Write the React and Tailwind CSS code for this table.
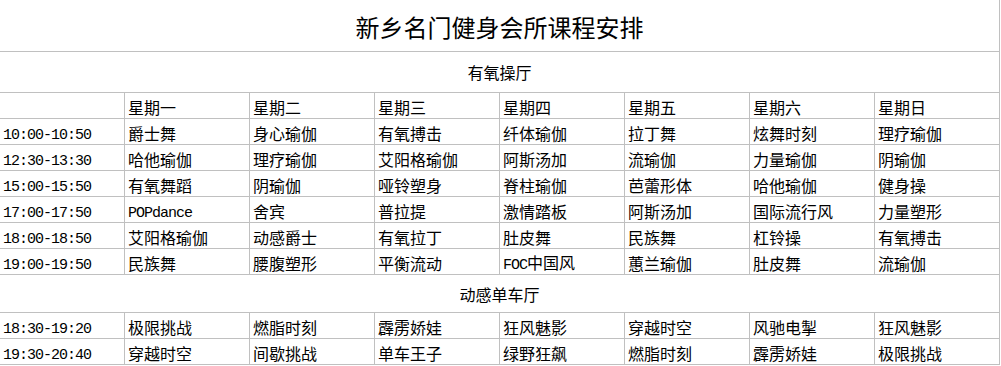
const days = ["星期一", "星期二", "星期三", "星期四", "星期五", "星期六", "星期日"];

const aerobic = [
  ["10:00-10:50", ["爵士舞", "身心瑜伽", "有氧搏击", "纤体瑜伽", "拉丁舞", "炫舞时刻", "理疗瑜伽"]],
  ["12:30-13:30", ["哈他瑜伽", "理疗瑜伽", "艾阳格瑜伽", "阿斯汤加", "流瑜伽", "力量瑜伽", "阴瑜伽"]],
  ["15:00-15:50", ["有氧舞蹈", "阴瑜伽", "哑铃塑身", "脊柱瑜伽", "芭蕾形体", "哈他瑜伽", "健身操"]],
  ["17:00-17:50", ["POPdance", "舍宾", "普拉提", "激情踏板", "阿斯汤加", "国际流行风", "力量塑形"]],
  ["18:00-18:50", ["艾阳格瑜伽", "动感爵士", "有氧拉丁", "肚皮舞", "民族舞", "杠铃操", "有氧搏击"]],
  ["19:00-19:50", ["民族舞", "腰腹塑形", "平衡流动", "FOC中国风", "蕙兰瑜伽", "肚皮舞", "流瑜伽"]],
];

const spinning = [
  ["18:30-19:20", ["极限挑战", "燃脂时刻", "霹雳娇娃", "狂风魅影", "穿越时空", "风驰电掣", "狂风魅影"]],
  ["19:30-20:40", ["穿越时空", "间歇挑战", "单车王子", "绿野狂飙", "燃脂时刻", "霹雳娇娃", "极限挑战"]],
];

// latin runs are drawn in a half-width mono face, like the old bitmap font
const Text = ({ value }) => {
  const parts = value.split(/([\x20-\x7e]+)/).filter(Boolean);
  return (
    <>
      {parts.map((p, i) =>
        /^[\x20-\x7e]+$/.test(p) ? (
          <span key={i} className="font-['Liberation_Mono',monospace] text-[15px] tracking-[-1px]">
            {p}
          </span>
        ) : (
          <span key={i}>{p}</span>
        )
      )}
    </>
  );
};

const Cell = ({ children }) => (
  <div className="h-[26px] flex items-center pl-[3px] pt-[3px] border-r border-b border-[#c0c0c0] whitespace-nowrap overflow-hidden">
    <div>{children}</div>
  </div>
);

const Row = ({ time, items }) => (
  <>
    <Cell>
      <Text value={time} />
    </Cell>
    {items.map((item, i) => (
      <Cell key={i}>
        <Text value={item} />
      </Cell>
    ))}
  </>
);

const Section = ({ title, height }) => (
  <div
    className={`col-span-8 flex items-center justify-center border-r border-b border-[#c0c0c0] ${height}`}
  >
    {title}
  </div>
);

export default function App() {
  return (
    <div className="w-[1001px] h-[366px] bg-white text-black overflow-hidden font-['Noto_Sans_CJK_SC',sans-serif] text-[16px] leading-none">
      <div className="w-[1000px] grid grid-cols-[repeat(8,125px)]">
        <div className="col-span-8 h-[52px] flex items-center justify-center pt-[3px] border-r border-b border-[#c0c0c0] text-[24px]">
          新乡名门健身会所课程安排
        </div>
        <Section title="有氧操厅" height="h-[41px]" />
        <Cell />
        {days.map((d) => (
          <Cell key={d}>{d}</Cell>
        ))}
        {aerobic.map(([time, items]) => (
          <Row key={time} time={time} items={items} />
        ))}
        <Section title="动感单车厅" height="h-[38px]" />
        {spinning.map(([time, items]) => (
          <Row key={time} time={time} items={items} />
        ))}
      </div>
    </div>
  );
}
